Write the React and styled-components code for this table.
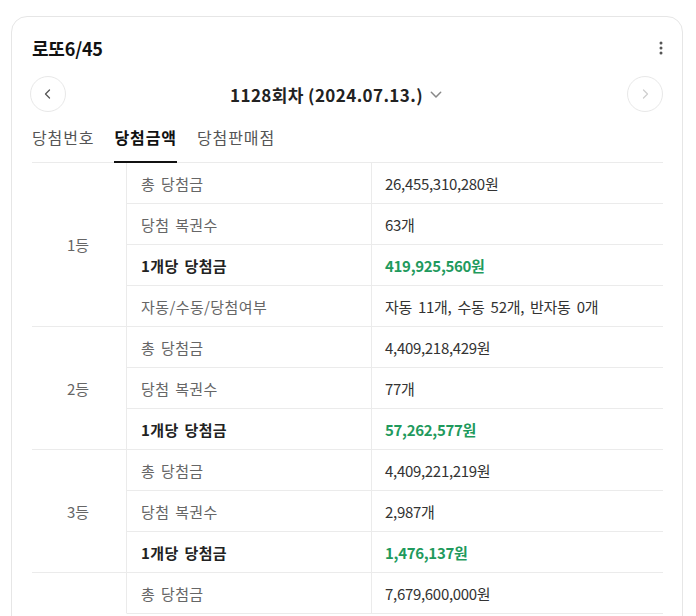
import React from "react";
import styled, { createGlobalStyle } from "styled-components";

const GlobalStyle = createGlobalStyle`
  html, body {
    margin: 0;
    padding: 0;
    background: #fff;
    overflow: hidden;
  }
  body {
    font-family: "Noto Sans CJK KR", "Noto Sans", sans-serif;
    color: #222;
  }
`;

const Card = styled.div`
  box-sizing: border-box;
  margin: 16px 0 0 11px;
  width: 672px;
  border: 1px solid #e6e6e6;
  border-radius: 16px;
  padding: 19px 19px 0 20px;
  height: 660px;
`;

const Header = styled.div`
  display: flex;
  align-items: center;
  justify-content: space-between;
  height: 24px;
`;

const Title = styled.h2`
  margin: 0;
  font-size: 18px;
  font-weight: 700;
  color: #111;
  letter-spacing: -0.2px;
`;

const MoreButton = styled.button`
  border: 0;
  background: none;
  padding: 0;
  width: 14px;
  height: 24px;
  display: flex;
  align-items: center;
  justify-content: center;
  margin-right: -5px;
`;

const NavRow = styled.div`
  display: flex;
  align-items: center;
  justify-content: space-between;
  margin-top: 16px;
  height: 36px;
`;

const RoundButton = styled.button`
  box-sizing: border-box;
  width: 36px;
  height: 36px;
  border-radius: 50%;
  border: 1px solid #e8e8e8;
  background: #fff;
  display: flex;
  align-items: center;
  justify-content: center;
  padding: 0;
  margin-left: ${(p) => (p.$left ? "-2px" : "0")};
  color: ${(p) => (p.$disabled ? "#cfcfcf" : "#555")};
`;

const RoundTitle = styled.div`
  display: flex;
  align-items: center;
  gap: 6px;
  font-size: 17px;
  font-weight: 700;
  letter-spacing: 0.4px;
  color: #222;
  margin-right: 20px;
`;

const DropIcon = styled.span`
  display: flex;
  color: #888;
`;

const Tabs = styled.div`
  display: flex;
  gap: 20px;
  height: 51px;
  border-bottom: 1px solid #ebebeb;
  box-sizing: border-box;
`;

const Tab = styled.div`
  display: flex;
  align-items: center;
  font-size: 16px;
  letter-spacing: 0.9px;
  font-weight: ${(p) => (p.$active ? 700 : 400)};
  color: ${(p) => (p.$active ? "#111" : "#555")};
  border-bottom: 2px solid ${(p) => (p.$active ? "#111" : "transparent")};
  margin-bottom: -1px;
  box-sizing: border-box;
`;

const Group = styled.div`
  display: grid;
  grid-template-columns: 95px 1fr;
`;

const RankCell = styled.div`
  display: flex;
  align-items: center;
  justify-content: center;
  border-right: 1px solid #ebebeb;
  border-bottom: 1px solid ${(p) => (p.$open ? "transparent" : "#ebebeb")};
  font-size: 15px;
  color: #666;
  padding-right: 2px;
`;

const Rows = styled.div`
  display: flex;
  flex-direction: column;
`;

const Row = styled.div`
  display: grid;
  grid-template-columns: 245px 1fr;
  height: 41px;
  box-sizing: border-box;
  border-bottom: 1px solid #ebebeb;
`;

const Label = styled.div`
  display: flex;
  align-items: center;
  padding-left: 14px;
  border-right: 1px solid #ebebeb;
  font-size: 15px;
  letter-spacing: 0.4px;
  word-spacing: 2px;
  font-weight: ${(p) => (p.$strong ? 700 : 400)};
  color: ${(p) => (p.$strong ? "#222" : "#666")};
`;

const Value = styled.div`
  display: flex;
  align-items: center;
  padding-left: 13px;
  font-size: 15px;
  font-weight: ${(p) => (p.$strong ? 700 : 400)};
  color: ${(p) => (p.$strong ? "#1f9a5d" : "#333")};
  letter-spacing: -0.3px;
  word-spacing: 3px;
`;

const groups = [
  {
    rank: "1등",
    rows: [
      ["총 당첨금", "26,455,310,280원"],
      ["당첨 복권수", "63개"],
      ["1개당 당첨금", "419,925,560원", true],
      ["자동/수동/당첨여부", "자동 11개, 수동 52개, 반자동 0개"],
    ],
  },
  {
    rank: "2등",
    rows: [
      ["총 당첨금", "4,409,218,429원"],
      ["당첨 복권수", "77개"],
      ["1개당 당첨금", "57,262,577원", true],
    ],
  },
  {
    rank: "3등",
    rows: [
      ["총 당첨금", "4,409,221,219원"],
      ["당첨 복권수", "2,987개"],
      ["1개당 당첨금", "1,476,137원", true],
    ],
  },
  {
    rank: "",
    open: true,
    rows: [["총 당첨금", "7,679,600,000원"]],
  },
];

const Chevron = ({ dir, size = 12 }) => {
  const d = {
    left: "M7.5 2 L3.5 6 L7.5 10",
    right: "M4.5 2 L8.5 6 L4.5 10",
    down: "M2 4.5 L6 8.5 L10 4.5",
  }[dir];
  return (
    <svg width={size} height={size} viewBox="0 0 12 12" fill="none">
      <path d={d} stroke="currentColor" strokeWidth="1.3" strokeLinecap="round" strokeLinejoin="round" />
    </svg>
  );
};

export default function App() {
  return (
    <>
      <GlobalStyle />
      <Card>
        <Header>
          <Title>로또6/45</Title>
          <MoreButton>
            <svg width="4" height="14" viewBox="0 0 4 14">
              <circle cx="2" cy="2" r="1.5" fill="#555" />
              <circle cx="2" cy="7" r="1.5" fill="#555" />
              <circle cx="2" cy="12" r="1.5" fill="#555" />
            </svg>
          </MoreButton>
        </Header>
        <NavRow>
          <RoundButton $left>
            <Chevron dir="left" />
          </RoundButton>
          <RoundTitle>
            1128회차 (2024.07.13.)
            <DropIcon>
              <Chevron dir="down" size={14} />
            </DropIcon>
          </RoundTitle>
          <RoundButton $disabled>
            <Chevron dir="right" />
          </RoundButton>
        </NavRow>
        <Tabs>
          <Tab>당첨번호</Tab>
          <Tab $active>당첨금액</Tab>
          <Tab>당첨판매점</Tab>
        </Tabs>
        {groups.map((g, i) => (
          <Group key={i}>
            <RankCell $open={g.open}>{g.rank}</RankCell>
            <Rows>
              {g.rows.map(([label, value, strong]) => (
                <Row key={label}>
                  <Label $strong={strong}>{label}</Label>
                  <Value $strong={strong}>{value}</Value>
                </Row>
              ))}
            </Rows>
          </Group>
        ))}
      </Card>
    </>
  );
}
